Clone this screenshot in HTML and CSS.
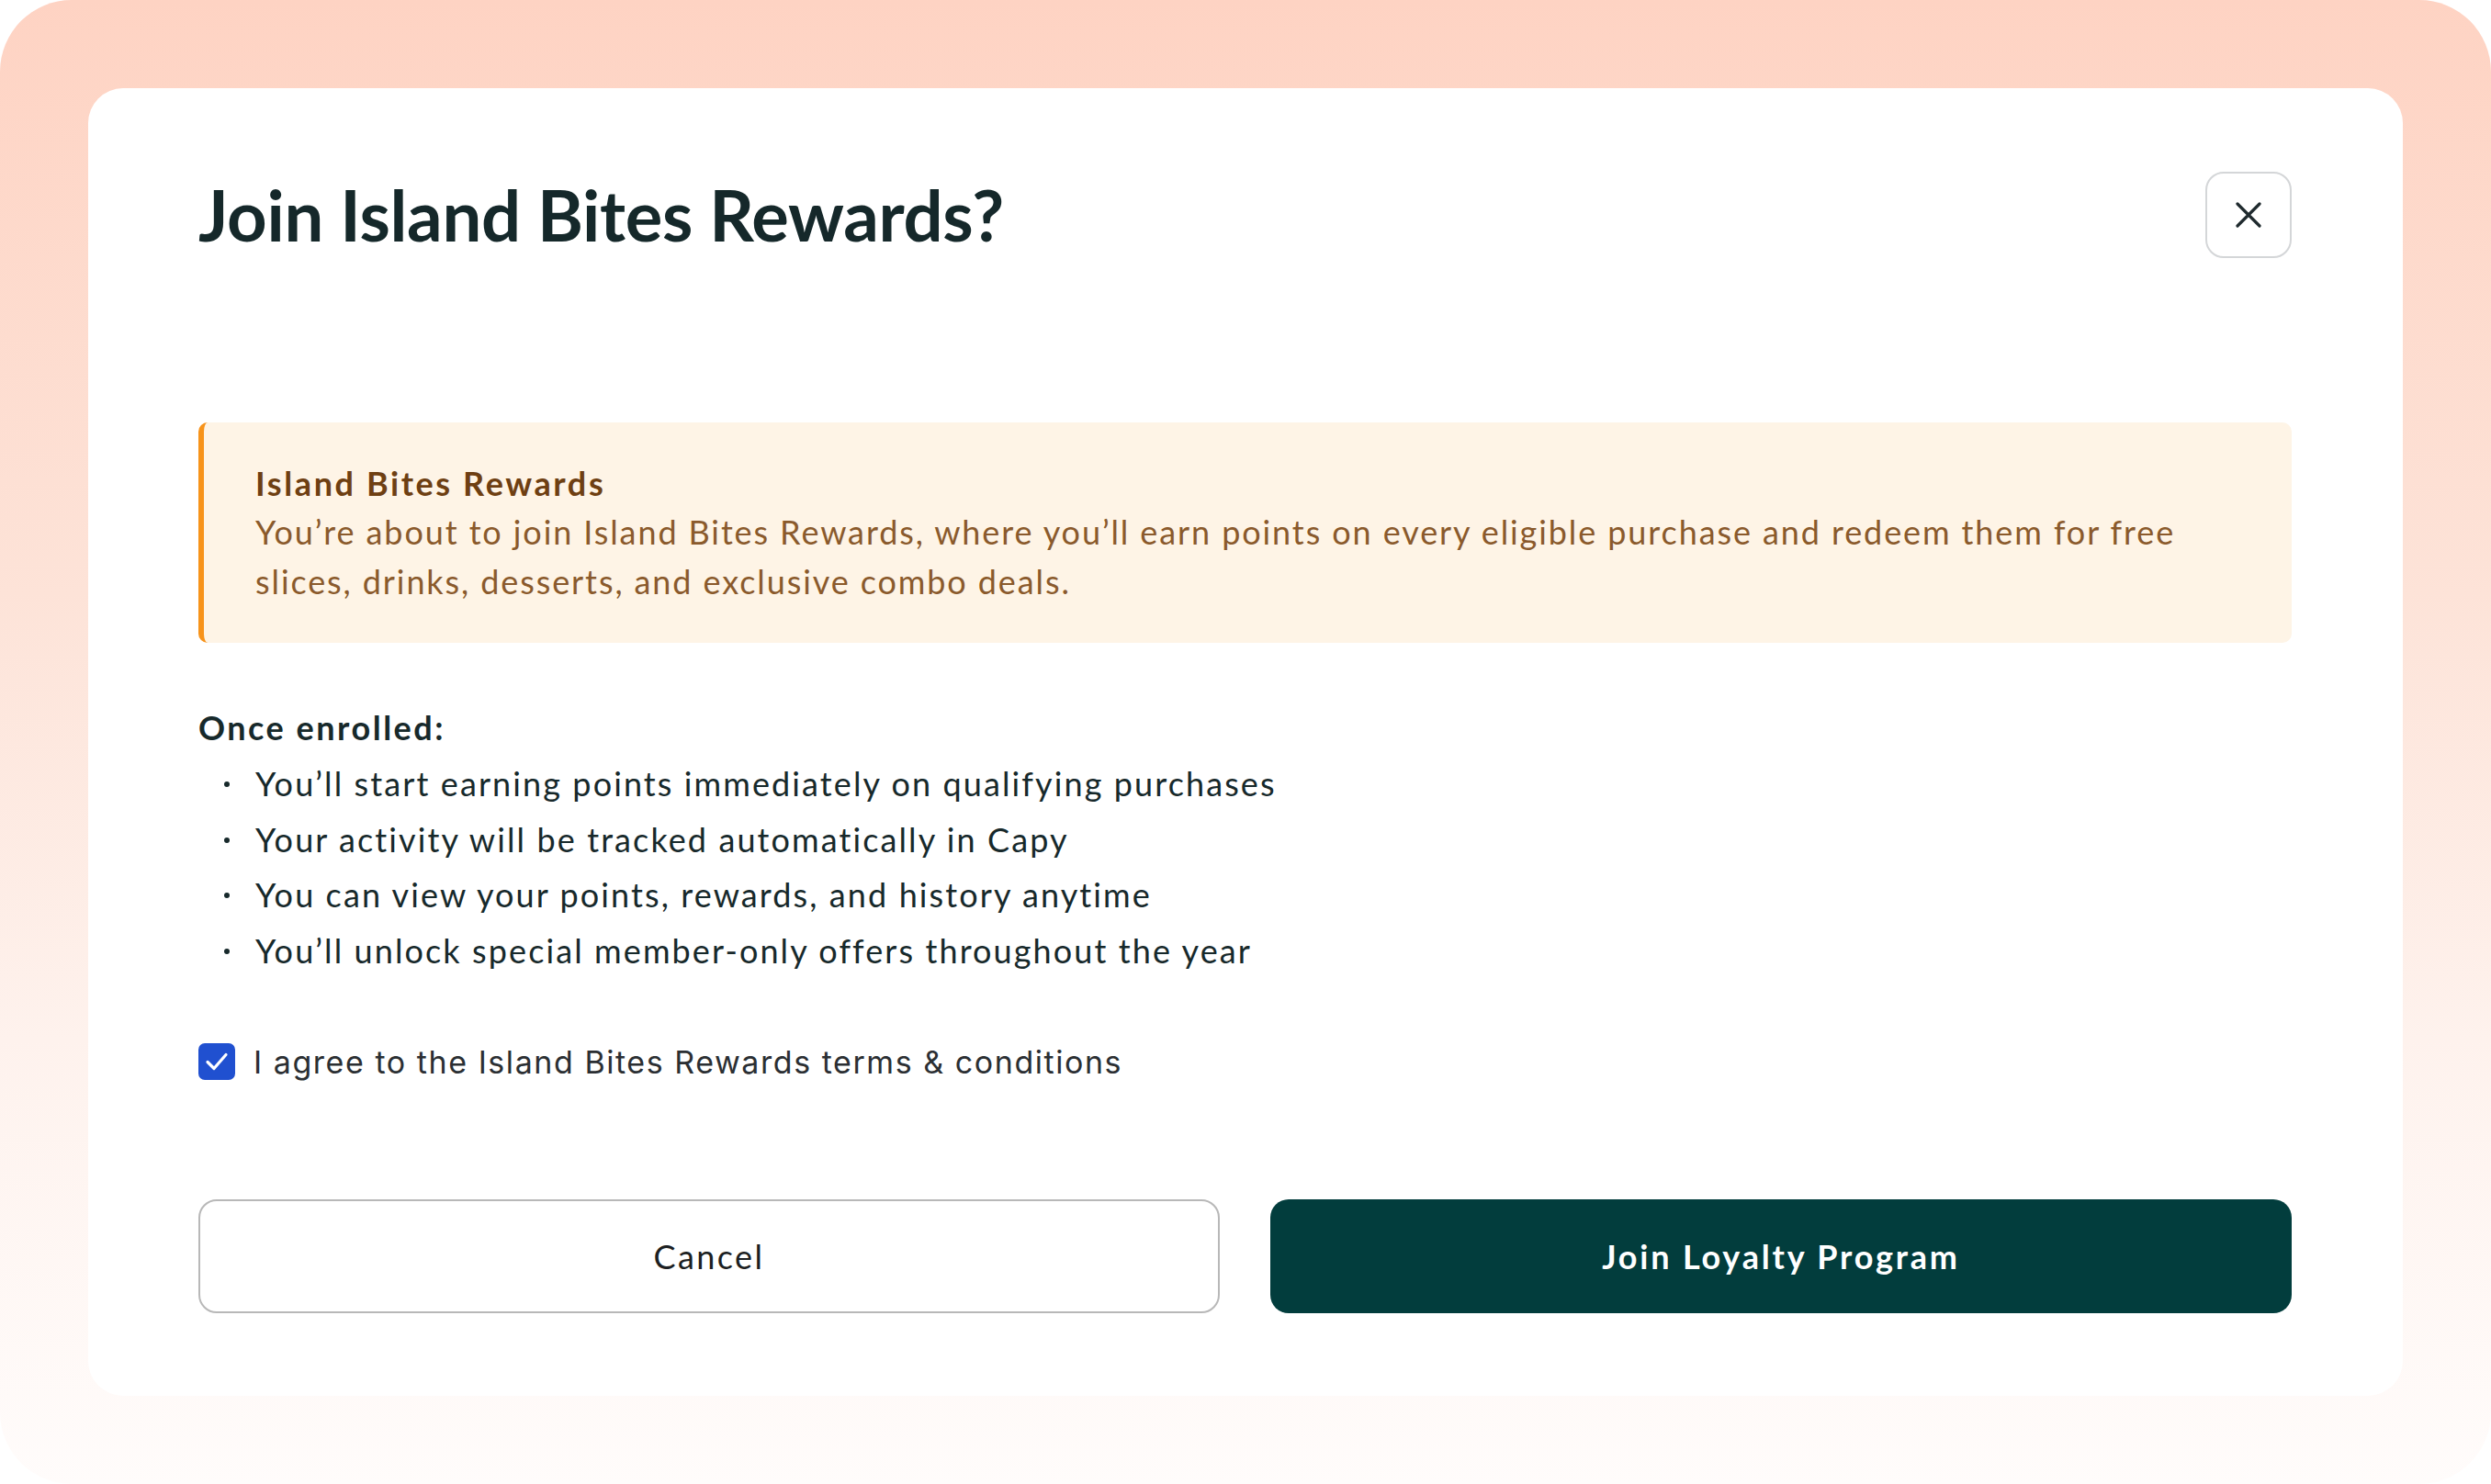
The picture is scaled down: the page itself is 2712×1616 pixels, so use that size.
FILE: index.html
```html
<!DOCTYPE html>
<html lang="en">
<head>
<meta charset="utf-8">
<title>Join Island Bites Rewards?</title>
<link rel="stylesheet" href="styles.css">
</head>
<body>
<div class="frame">
  <div class="card">
    <div class="header">
      <h1 class="title">Join Island Bites Rewards?</h1>
      <button class="close" aria-label="Close">
        <svg width="28" height="28" viewBox="0 0 28 28"><path d="M2 2 L26 26 M26 2 L2 26" stroke="#1f2a2e" stroke-width="3.2" stroke-linecap="round" fill="none"/></svg>
      </button>
    </div>
    <div class="notice">
      <div class="notice-title">Island Bites Rewards</div>
      <p class="notice-text">You’re about to join Island Bites Rewards, where you’ll earn points on every eligible purchase and redeem them for free slices, drinks, desserts, and exclusive combo deals.</p>
    </div>
    <div class="enrolled">
      <div class="enrolled-title">Once enrolled:</div>
      <ul class="list">
        <li>You’ll start earning points immediately on qualifying purchases</li>
        <li>Your activity will be tracked automatically in Capy</li>
        <li>You can view your points, rewards, and history anytime</li>
        <li>You’ll unlock special member-only offers throughout the year</li>
      </ul>
    </div>
    <label class="agree">
      <span class="checkbox">
        <svg width="26" height="22" viewBox="0 0 26 22"><path d="M3 11.5 L10 18.5 L23 3.5" stroke="#fff" stroke-width="3.2" stroke-linecap="round" stroke-linejoin="round" fill="none"/></svg>
      </span>
      <span class="agree-text">I agree to the Island Bites Rewards terms &amp; conditions</span>
    </label>
    <div class="actions">
      <button class="btn btn-cancel">Cancel</button>
      <button class="btn btn-join">Join Loyalty Program</button>
    </div>
  </div>
</div>
</body>
</html>
```

FILE: styles.css
```css
html, body {
  margin: 0;
  padding: 0;
  background: #ffffff;
}
body {
  width: 2712px;
  height: 1616px;
  font-family: "Lato", "Noto Sans", sans-serif;
}
.frame {
  width: 2712px;
  height: 1616px;
  box-sizing: border-box;
  padding: 96px;
  border-radius: 78px;
  background: linear-gradient(180deg, #fed3c3 0%, #fde3d8 40%, #fef2ed 70%, #fffcfb 100%);
}
.card {
  height: 100%;
  box-sizing: border-box;
  background: #ffffff;
  border-radius: 38px;
  padding: 91px 121px 90px 120px;
  display: flex;
  flex-direction: column;
}
.header {
  display: flex;
  align-items: center;
  justify-content: space-between;
  height: 94px;
}
.title {
  margin: 0;
  font-size: 76px;
  font-weight: 700;
  letter-spacing: -0.3px;
  color: #15282a;
  line-height: 1;
}
.close {
  width: 94px;
  height: 94px;
  box-sizing: border-box;
  border: 2px solid #d4d6d8;
  border-radius: 20px;
  background: #fff;
  display: flex;
  align-items: center;
  justify-content: center;
  padding: 0;
}
.notice {
  margin-top: 179px;
  background: #fef4e6;
  border-left: 6px solid #f7931a;
  border-radius: 10px;
  padding: 40px 56px 40px 56px;
  color: #8a5a2c;
}
.notice-title {
  font-size: 36px;
  font-weight: 700;
  letter-spacing: 2.6px;
  line-height: 52px;
  color: #6e3f12;
}
.notice-text {
  margin: 0;
  font-size: 36px;
  letter-spacing: 1.9px;
  line-height: 54px;
}
.enrolled {
  margin-top: 65px;
  color: #17292b;
}
.enrolled-title {
  font-size: 36px;
  font-weight: 700;
  letter-spacing: 2.5px;
  line-height: 54px;
}
.list {
  list-style: none;
  margin: 4px 0 0 0;
  padding: 0;
}
.list li {
  position: relative;
  padding-left: 62px;
  font-size: 36px;
  letter-spacing: 2.1px;
  line-height: 60.5px;
}
.list li::before {
  content: "";
  position: absolute;
  left: 28px;
  top: 28px;
  width: 6px;
  height: 6px;
  border-radius: 50%;
  background: #17292b;
}
.agree {
  margin-top: 64px;
  display: flex;
  align-items: center;
  gap: 20px;
  height: 54px;
}
.checkbox {
  width: 40px;
  height: 40px;
  border-radius: 7px;
  background: #2050d0;
  display: flex;
  align-items: center;
  justify-content: center;
}
.agree-text {
  font-family: "Inter", "Roboto", sans-serif;
  font-size: 34px;
  letter-spacing: 1.55px;
  color: #2b2f33;
}
.actions {
  margin-top: auto;
  display: grid;
  grid-template-columns: 1fr 1fr;
  gap: 55px;
}
.btn {
  height: 124px;
  border-radius: 20px;
  font-family: "Lato", "Noto Sans", sans-serif;
  font-size: 36px;
  letter-spacing: 2.4px;
  cursor: pointer;
}
.btn-cancel {
  background: #fff;
  border: 2px solid #b8b8b8;
  color: #1c1f22;
}
.btn-join {
  background: #023d3d;
  border: none;
  color: #ffffff;
  font-weight: 700;
  letter-spacing: 2.8px;
}
```
